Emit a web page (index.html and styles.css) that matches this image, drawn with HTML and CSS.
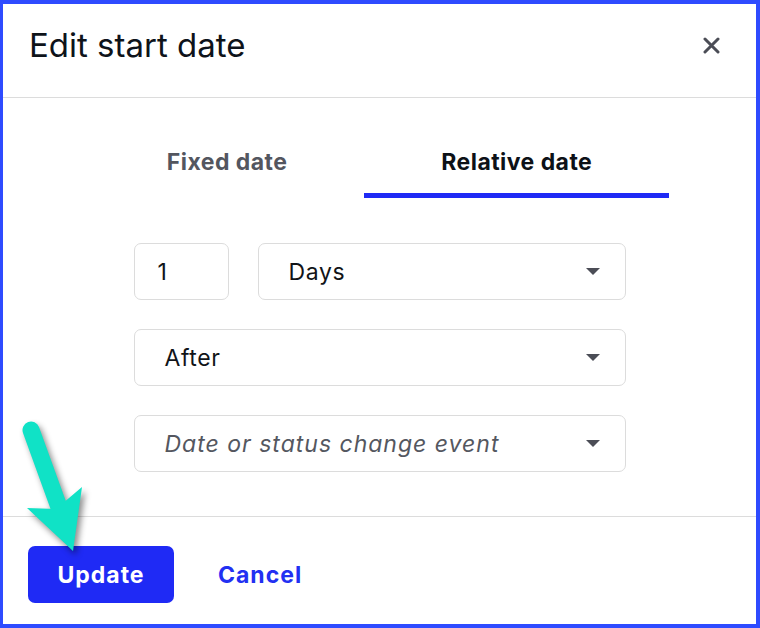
FILE: index.html
```html
<!DOCTYPE html>
<html>
<head>
<meta charset="utf-8">
<link rel="stylesheet" href="styles.css">
</head>
<body>
<div class="dialog">
  <header class="header">
    <h1 class="title">Edit start date</h1>
    <button class="close" aria-label="Close">
      <svg width="17" height="17" viewBox="0 0 17 17"><path d="M2 2 L15 15 M15 2 L2 15" stroke="#4b4d56" stroke-width="3" stroke-linecap="round" fill="none"/></svg>
    </button>
  </header>
  <main class="body">
    <div class="tabs">
      <div class="tab">Fixed date</div>
      <div class="tab active">Relative date</div>
    </div>
    <div class="form">
      <div class="row">
        <div class="field num">1</div>
        <div class="field select grow"><span>Days</span><i class="caret"></i></div>
      </div>
      <div class="row">
        <div class="field select grow"><span>After</span><i class="caret"></i></div>
      </div>
      <div class="row">
        <div class="field select grow placeholder"><span>Date or status change event</span><i class="caret"></i></div>
      </div>
    </div>
  </main>
  <footer class="footer">
    <button class="btn-primary">Update</button>
    <button class="btn-link">Cancel</button>
  </footer>
  <svg class="arrow" width="110" height="160" viewBox="0 0 110 160">
    <g class="arrow-g">
      <line x1="31" y1="20" x2="60" y2="100" stroke="#10e2c6" stroke-width="17" stroke-linecap="round"/>
      <polygon points="27,98 56,99 82,77 73,141" fill="#10e2c6"/>
    </g>
  </svg>
</div>
</body>
</html>
```
FILE: styles.css
```css
* { box-sizing: border-box; }
html, body { margin: 0; padding: 0; }
body {
  width: 760px;
  height: 628px;
  font-family: Inter, "Noto Sans", sans-serif;
  background: #fff;
  overflow: hidden;
}
.dialog {
  position: relative;
  width: 760px;
  height: 628px;
  border: 4px solid #2e4bff;
  border-left-width: 3px;
  background: #fff;
  display: flex;
  flex-direction: column;
}
.header {
  display: flex;
  align-items: center;
  justify-content: space-between;
  height: 94px;
  padding: 0 30px 11px 26px;
  border-bottom: 1px solid #dcdcdc;
}
.title {
  margin: 0;
  font-size: 33px;
  font-weight: 400;
  color: #0e131a;
  line-height: 48px;
}
.close {
  border: 0;
  background: none;
  padding: 6px;
  width: 29px;
  height: 29px;
  display: flex;
  align-items: center;
  justify-content: center;
  cursor: pointer;
}
.body {
  padding: 50px 0 44px;
  border-bottom: 1px solid #dcdcdc;
}
.tabs {
  display: flex;
  justify-content: center;
}
.tab {
  padding: 0 77px 16px;
  font-size: 23px;
  font-weight: 700;
  line-height: 29px;
  letter-spacing: 0.45px;
  color: #53565f;
  border-bottom: 5px solid transparent;
}
.tab.active {
  color: #0d1117;
  border-bottom-color: #1f2af5;
}
.form {
  width: 492px;
  margin: 45px auto 0;
  display: flex;
  flex-direction: column;
  gap: 29px;
}
.row {
  display: flex;
  gap: 29px;
}
.field {
  height: 57px;
  border: 1px solid #dcdcdc;
  border-radius: 7px;
  display: flex;
  align-items: center;
  font-size: 23px;
  letter-spacing: 0.6px;
  color: #111418;
}
.num {
  width: 95px;
  padding-left: 23px;
}
.grow { flex: 1; }
.select {
  padding: 0 25px 0 30px;
  justify-content: space-between;
}
.placeholder {
  font-style: italic;
  letter-spacing: 1px;
  color: #545760;
}
.caret {
  width: 0;
  height: 0;
  border-left: 7px solid transparent;
  border-right: 7px solid transparent;
  border-top: 7px solid #4b4d56;
}
.footer {
  padding: 29px 25px 0;
  display: flex;
  align-items: center;
  gap: 44px;
}
.btn-primary {
  width: 146px;
  height: 57px;
  border: 0;
  border-radius: 7px;
  background: #1f2af5;
  color: #fff;
  font-family: inherit;
  font-size: 23px;
  font-weight: 700;
  letter-spacing: 1px;
  padding: 0;
}
.btn-link {
  border: 0;
  background: none;
  padding: 0;
  font-family: inherit;
  font-size: 23px;
  font-weight: 700;
  letter-spacing: 1px;
  color: #2230f2;
}
.arrow {
  position: absolute;
  left: -3px;
  top: 406px;
  overflow: visible;
}
.arrow-g {
  filter: drop-shadow(3px 4px 3px rgba(0, 0, 0, 0.45));
}
```
